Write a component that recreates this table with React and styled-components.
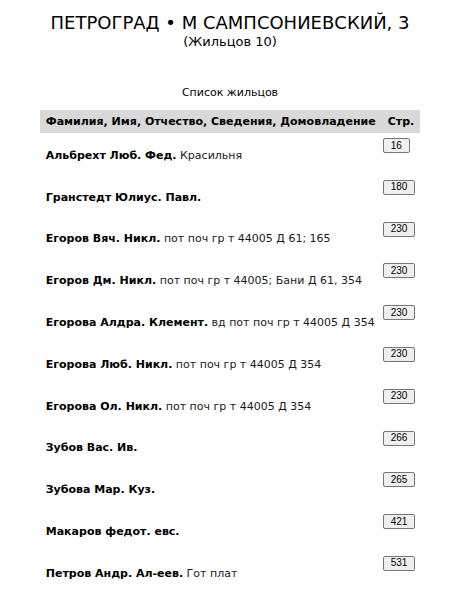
import React from "react";
import styled, { createGlobalStyle } from "styled-components";

const residents = [
  { name: "Альбрехт Люб. Фед.", note: "Красильня", page: "16" },
  { name: "Гранстедт Юлиус. Павл.", note: "", page: "180" },
  { name: "Егоров Вяч. Никл.", note: "пот поч гр т 44005 Д 61; 165", page: "230" },
  { name: "Егоров Дм. Никл.", note: "пот поч гр т 44005; Бани Д 61, 354", page: "230" },
  { name: "Егорова Алдра. Клемент.", note: "вд пот поч гр т 44005 Д 354", page: "230" },
  { name: "Егорова Люб. Никл.", note: "пот поч гр т 44005 Д 354", page: "230" },
  { name: "Егорова Ол. Никл.", note: "пот поч гр т 44005 Д 354", page: "230" },
  { name: "Зубов Вас. Ив.", note: "", page: "266" },
  { name: "Зубова Мар. Куз.", note: "", page: "265" },
  { name: "Макаров федот. евс.", note: "", page: "421" },
  { name: "Петров Андр. Ал-еев.", note: "Гот плат", page: "531" },
];

export default function App() {
  return (
    <>
      <GlobalStyle />
      <Page>
        <Heading>
          <Title>ПЕТРОГРАД • М САМПСОНИЕВСКИЙ, 3</Title>
          <Count>(Жильцов 10)</Count>
        </Heading>
        <Caption>Список жильцов</Caption>
        <Table>
          <thead>
            <tr>
              <HeadCell>Фамилия, Имя, Отчество, Сведения, Домовладение</HeadCell>
              <HeadCell>Стр.</HeadCell>
            </tr>
          </thead>
          <tbody>
            {residents.map((r, i) => (
              <Row key={i}>
                <NameCell>
                  <b>{r.name}</b>
                  {r.note && <Note> {r.note}</Note>}
                </NameCell>
                <PageCell>
                  <PageButton>{r.page}</PageButton>
                </PageCell>
              </Row>
            ))}
          </tbody>
        </Table>
      </Page>
    </>
  );
}

const GlobalStyle = createGlobalStyle`
  body {
    margin: 0;
    background: #fff;
    color: #000;
    font-family: "DejaVu Sans", Verdana, sans-serif;
  }
`;

const Page = styled.div`
  width: 454px;
  padding: 0 0 0 6px;
  box-sizing: border-box;
`;

const Heading = styled.div`
  text-align: center;
  padding-top: 12px;
`;

const Title = styled.h1`
  margin: 0;
  font-size: 18px;
  font-weight: normal;
  line-height: 22px;
`;

const Count = styled.div`
  font-size: 13px;
  line-height: 16px;
`;

const Caption = styled.div`
  margin-top: 36px;
  text-align: center;
  font-size: 11px;
  line-height: 14px;
`;

const Table = styled.table`
  width: 380px;
  margin: 10px auto 0;
  border-collapse: collapse;
  font-size: 11px;
`;

const HeadCell = styled.th`
  background: #d9d9d9;
  height: 23px;
  padding: 0 6px;
  text-align: left;
  font-weight: bold;
  white-space: nowrap;
`;

const Row = styled.tr`
  height: 41.8px;
`;

const NameCell = styled.td`
  padding: 3px 6px 0;
  vertical-align: middle;
`;

const Note = styled.span`
  color: #1a1a1a;
`;

const PageCell = styled.td`
  vertical-align: top;
  padding: 5px 2px 0 1px;
`;

const PageButton = styled.button`
  height: 15px;
  padding: 0 7px;
  border: 1px solid #767676;
  border-radius: 2px;
  background: #efefef;
  color: #000;
  font-family: "Liberation Sans", Arial, sans-serif;
  font-size: 10px;
  line-height: 12px;
`;
